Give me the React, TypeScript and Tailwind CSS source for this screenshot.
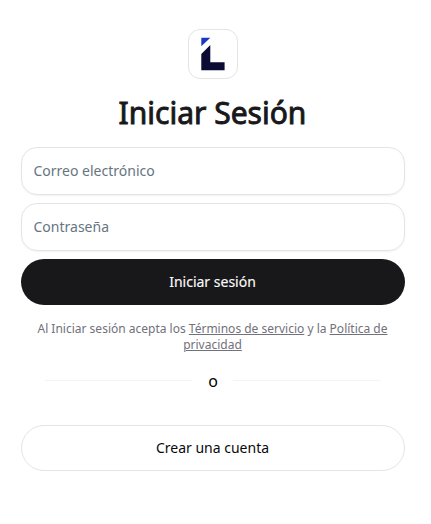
export default function App() {
  return (
    <main className="flex h-[524px] w-full flex-col bg-white pt-[29px] pr-[26px] pl-[21px] font-['Noto_Sans',sans-serif] text-zinc-950">
      <div className="mx-auto flex size-[50px] items-center justify-center rounded-xl border border-zinc-200">
        <svg width="26" height="34" viewBox="0 0 26 34">
          <path d="M1.3 .8H10.3L1.3 9.3Z" fill="#1739c6" />
          <path d="M1.3 17L10.3 8V25.3H24.6V33.2H1.3Z" fill="#0b0b33" />
        </svg>
      </div>
      <h1 className="mt-4 pr-px text-center text-[30px] leading-9 font-normal text-zinc-900 [-webkit-text-stroke:0.9px_#18181b]">Iniciar Sesión</h1>
      <form className="mt-4 flex flex-col gap-2">
        <input type="email" placeholder="Correo electrónico" className="h-12 rounded-2xl border border-zinc-200 pr-3 pb-[2px] pl-[11.5px] text-sm shadow-xs placeholder:text-[#66757f]" />
        <input type="password" placeholder="Contraseña" className="h-12 rounded-2xl border border-zinc-200 pr-3 pb-[2px] pl-[11.5px] text-sm shadow-xs placeholder:text-[#66757f]" />
        <button type="button" className="h-[46px] rounded-full bg-zinc-900 pr-px text-sm font-normal text-zinc-50 [-webkit-text-stroke:0.15px_#fafafa]">Iniciar sesión</button>
      </form>
      <p className="mt-4 pr-[13px] pl-3 text-center text-xs leading-4 text-zinc-500">
        Al Iniciar sesión acepta los <a className="underline">Términos de servicio</a> y la <a className="underline">Política de privacidad</a>
      </p>
      <div className="mt-4 flex h-6 items-center px-6 text-base text-black">
        <span className="mb-px h-px w-[147px] bg-zinc-100" />
        <span className="flex-1 pl-px text-center">o</span>
        <span className="mb-px h-px w-[148px] bg-zinc-100" />
      </div>
      <button type="button" className="mt-8 h-[46px] rounded-full border border-zinc-200 pr-px text-sm font-normal">Crear una cuenta</button>
    </main>
  );
}
